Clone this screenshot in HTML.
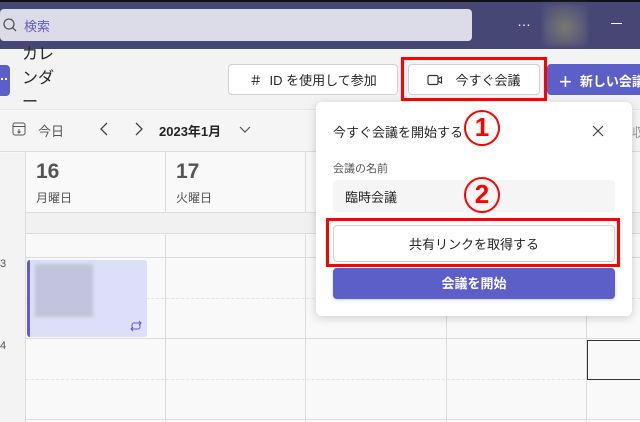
<!DOCTYPE html>
<html><head><meta charset="utf-8"><style>
*{margin:0;padding:0;box-sizing:border-box}
body{width:640px;height:422px;overflow:hidden;position:relative;background:#f9f9f9;font-family:"Liberation Sans","Noto Sans CJK JP",sans-serif;color:#242424}
.a{position:absolute}
.vl{position:absolute;width:1px;background:#dcdcdc;top:152px;bottom:0}
.hl{position:absolute;height:1px;background:#dcdcdc;left:25px;right:0}
.btn{position:absolute;background:#fff;border:1px solid #d1d1d1;border-radius:4px;font-size:13px;display:flex;align-items:center;justify-content:center}
.red{position:absolute;border:3px solid #f00}
.circ{position:absolute;width:36px;height:36px;border:2.5px solid #f00;border-radius:50%;color:#f00;font-weight:bold;font-size:26px;line-height:31px;text-align:center;font-family:"Liberation Sans",sans-serif}
</style></head><body>
<div class="a" style="left:0;top:0;width:640px;height:49px;background:#464775"></div>
<div class="a" style="left:0;top:0;width:640px;height:2px;background:#111"></div>
<div class="a" style="left:0;top:9px;width:472px;height:32px;background:#dcdce8;border-radius:4px"></div>
<svg class="a" style="left:2px;top:17px" width="16" height="16" viewBox="0 0 16 16"><circle cx="7" cy="7" r="5" fill="none" stroke="#555" stroke-width="1.3"/><path d="M10.5 10.5L14 14" stroke="#555" stroke-width="1.3"/></svg>
<div class="a" style="left:24px;top:16px;font-size:13px;color:#5b5fc7">検索</div>
<div class="a" style="left:517px;top:13px;font-size:14px;color:#fff">…</div>
<div class="a" style="left:543px;top:4px;width:44px;height:42px;background:radial-gradient(circle at 50% 55%,#7a7a70,#5a5a78 60%,#4a4b78);filter:blur(2px)"></div>
<div class="a" style="left:611px;top:23px;width:11px;height:1px;background:#fff"></div>
<div class="a" style="left:0;top:49px;width:640px;height:61px;background:#f3f3f3;border-bottom:1px solid #e6e6e6"></div>
<div class="a" style="left:0;top:65px;width:10px;height:31px;background:#5b5fc7;border-radius:0 4px 4px 0"></div>
<div class="a" style="left:1px;top:78px;width:6px;height:4px;border-top:2px dotted #fff"></div>
<div class="a" style="left:22px;top:43px;font-size:16px;line-height:24px;width:40px;white-space:nowrap">カレ<br>ンダ<br>ー</div>
<div class="btn" style="left:228px;top:64px;width:170px;height:31px">＃&nbsp; ID を使用して参加</div>
<div class="btn" style="left:408px;top:64px;width:132px;height:31px"><svg width="16" height="12" viewBox="0 0 16 12" style="margin-right:12px"><rect x="1" y="1.5" width="10" height="9" rx="1.5" fill="none" stroke="#333" stroke-width="1.2"/><path d="M11 5L14.5 3v6L11 7" fill="none" stroke="#333" stroke-width="1.2"/></svg>今すぐ会議</div>
<div class="red" style="left:401px;top:57px;width:146px;height:44px"></div>
<div class="a" style="left:547px;top:64px;width:100px;height:31px;background:#5b5fc7;border-radius:4px;color:#fff;font-size:13px;font-weight:bold;padding:5px 0 0 12px;white-space:nowrap"><span style="font-size:22px;font-weight:normal;vertical-align:-3px;margin-right:8px">+</span>新しい会議</div>
<div class="a" style="left:0;top:111px;width:640px;height:41px;background:#f5f5f5;border-bottom:1px solid #dcdcdc"></div>
<svg class="a" style="left:12px;top:122px" width="14" height="14" viewBox="0 0 14 14"><rect x="1" y="1" width="12" height="12" rx="2" fill="none" stroke="#555"/><path d="M1 4.5h12M7 7v4M5.5 9.5L7 11l1.5-1.5" stroke="#555" fill="none"/></svg>
<div class="a" style="left:38px;top:121px;font-size:13px;color:#555">今日</div>
<svg class="a" style="left:99px;top:122px" width="10" height="14" viewBox="0 0 10 14"><path d="M8 1L2 7l6 6" fill="none" stroke="#444" stroke-width="1.3"/></svg>
<svg class="a" style="left:134px;top:122px" width="10" height="14" viewBox="0 0 10 14"><path d="M2 1l6 6-6 6" fill="none" stroke="#444" stroke-width="1.3"/></svg>
<div class="a" style="left:159px;top:121px;font-size:13px;font-weight:bold">2023年1月</div>
<svg class="a" style="left:239px;top:126px" width="12" height="8" viewBox="0 0 12 8"><path d="M1 1l5 5 5-5" fill="none" stroke="#555" stroke-width="1.2"/></svg>
<div class="a" style="left:0;top:153px;width:25px;height:269px;background:#f3f3f3"></div>
<div class="vl" style="left:25px"></div><div class="vl" style="left:165px"></div><div class="vl" style="left:305px"></div><div class="vl" style="left:446px"></div><div class="vl" style="left:586px"></div>
<div class="a" style="left:26px;top:212px;width:614px;height:21px;background:#f1f1f1"></div>
<div class="hl" style="top:212px"></div><div class="hl" style="top:233px"></div><div class="hl" style="top:257px"></div><div class="hl" style="top:338px"></div><div class="hl" style="top:419px"></div>
<div class="a" style="left:26px;top:298px;right:0;border-top:1px dashed #e4e4e4"></div>
<div class="a" style="left:26px;top:379px;right:0;border-top:1px dashed #e4e4e4"></div>
<div class="a" style="left:36px;top:160px;font-size:21px;font-weight:bold;color:#555">16</div>
<div class="a" style="left:36px;top:189px;font-size:12px;color:#555">月曜日</div>
<div class="a" style="left:176px;top:160px;font-size:21px;font-weight:bold;color:#555">17</div>
<div class="a" style="left:176px;top:189px;font-size:12px;color:#555">火曜日</div>
<div class="a" style="left:0;top:258px;font-size:11px;color:#555">3</div>
<div class="a" style="left:0;top:340px;font-size:11px;color:#555">4</div>
<div class="a" style="left:27px;top:260px;width:120px;height:77px;background:#dcdff7;border-left:3px solid #5b5fc7;border-radius:3px"></div>
<div class="a" style="left:35px;top:264px;width:58px;height:53px;background:#c2c3dc;filter:blur(1.5px)"></div>
<svg class="a" style="left:129px;top:320px" width="14" height="12" viewBox="0 0 14 12"><path d="M3 8V5a2 2 0 0 1 2-2h7M10 1l2 2-2 2M11 4v3a2 2 0 0 1-2 2H2M4 11L2 9l2-2" fill="none" stroke="#5b5fc7" stroke-width="1"/></svg>
<div class="a" style="left:587px;top:340px;width:60px;height:40px;border:1px solid #333"></div>
<div class="a" style="left:316px;top:102px;width:316px;height:214px;background:#fff;border-radius:6px;box-shadow:0 2px 10px rgba(0,0,0,.18)"></div>
<div class="a" style="left:333px;top:122px;font-size:13px">今すぐ会議を開始する</div>
<svg class="a" style="left:592px;top:125px" width="12" height="12" viewBox="0 0 12 12"><path d="M1 1l10 10M11 1L1 11" stroke="#444" stroke-width="1.2"/></svg>
<div class="a" style="left:333px;top:160px;font-size:11px;color:#555">会議の名前</div>
<div class="a" style="left:333px;top:180px;width:282px;height:32px;background:#f5f5f5;border-radius:4px;font-size:13px;padding:7px 0 0 12px">臨時会議</div>
<div class="btn" style="left:333px;top:225px;width:282px;height:37px">共有リンクを取得する</div>
<div class="red" style="left:326px;top:218px;width:294px;height:49px"></div>
<div class="a" style="left:333px;top:268px;width:282px;height:31px;background:#5b5fc7;border-radius:4px;color:#fff;font-size:13px;font-weight:bold;text-align:center;line-height:31px;box-shadow:0 1px 3px rgba(0,0,0,.2)">会議を開始</div>
<div class="circ" style="left:464px;top:110px">1</div>
<div class="circ" style="left:464px;top:177px">2</div>
<div class="a" style="left:632px;top:122px;font-size:13px;color:#999">収</div>
</body></html>
